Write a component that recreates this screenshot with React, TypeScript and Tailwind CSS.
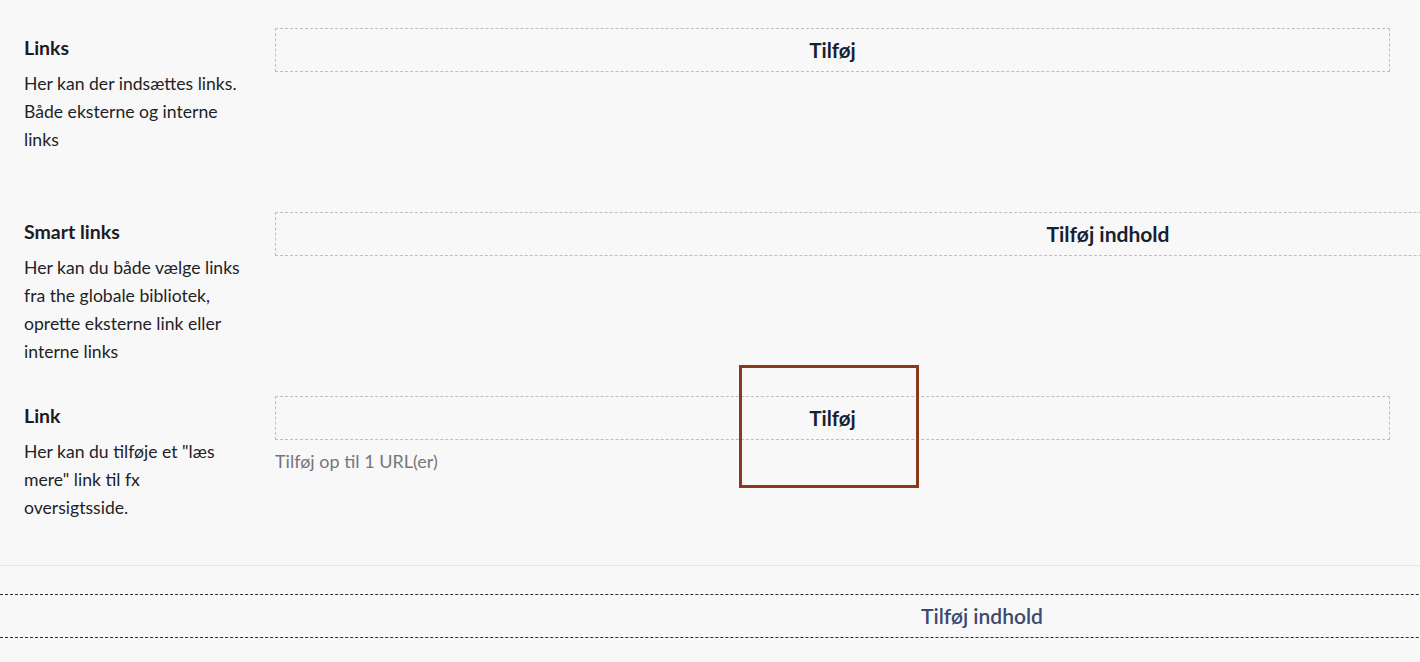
import React from "react";

const font = { fontFamily: "Lato, 'Noto Sans', sans-serif" };

function Row({
  title,
  lines,
  children,
  h,
}: {
  title: string;
  lines: string[];
  children: React.ReactNode;
  h: string;
}) {
  return (
    <div className={"flex " + h}>
      <div className="w-[275px] shrink-0 pl-6 pt-[35px]">
        <div className="text-[19.5px] leading-[26px] font-bold text-[#1c1c24]">{title}</div>
        <div className="mt-[9px] text-[17.6px] leading-[28px] text-[#1f1f26]">
          {lines.map((l, i) => (
            <div key={i}>{l}</div>
          ))}
        </div>
      </div>
      <div className="flex-1 min-w-0 pt-[28px]">{children}</div>
    </div>
  );
}

export default function App() {
  return (
    <div
      className="relative w-[1420px] h-[662px] overflow-hidden bg-[#f9f8f9]"
      style={font}
    >
      <Row h="h-[184px]" title="Links" lines={["Her kan der indsættes links.", "Både eksterne og interne", "links"]}>
        <div className="w-[1115px] h-[44px] border border-dashed border-[#bdbdc2] flex items-center justify-center">
          <span className="text-[20.5px] font-bold text-[#1a1f33]">Tilføj</span>
        </div>
      </Row>
      <Row
        h="h-[184px]"
        title="Smart links"
        lines={[
          "Her kan du både vælge links",
          "fra the globale bibliotek,",
          "oprette eksterne link eller",
          "interne links",
        ]}
      >
        <div className="w-[1666px] h-[44px] border border-dashed border-[#bdbdc2] flex items-center justify-center">
          <span className="text-[21px] font-bold text-[#1a1f33]">Tilføj indhold</span>
        </div>
      </Row>
      <Row
        h="h-[197px]"
        title="Link"
        lines={['Her kan du tilføje et "læs', 'mere" link til fx', "oversigtsside."]}
      >
        <div className="w-[1115px] h-[44px] border border-dashed border-[#bdbdc2] flex items-center justify-center">
          <span className="text-[20.5px] font-bold text-[#1a1f33]">Tilføj</span>
        </div>
        <div className="mt-[11px] text-[18px] leading-[20px] text-[#76767c]">
          Tilføj op til 1 URL(er)
        </div>
      </Row>
      <div className="border-t border-[#e6e5e7]" />
      <div className="mt-[28px] w-[1964px] h-[44px] border-y border-dashed border-[#2c303b] flex items-center justify-center">
        <span className="text-[21px] font-semibold text-[#3a4a70]">Tilføj indhold</span>
      </div>
      <div className="absolute left-[739px] top-[365px] w-[180px] h-[123px] border-[3px] border-[#8a3a1c]" />
    </div>
  );
}
